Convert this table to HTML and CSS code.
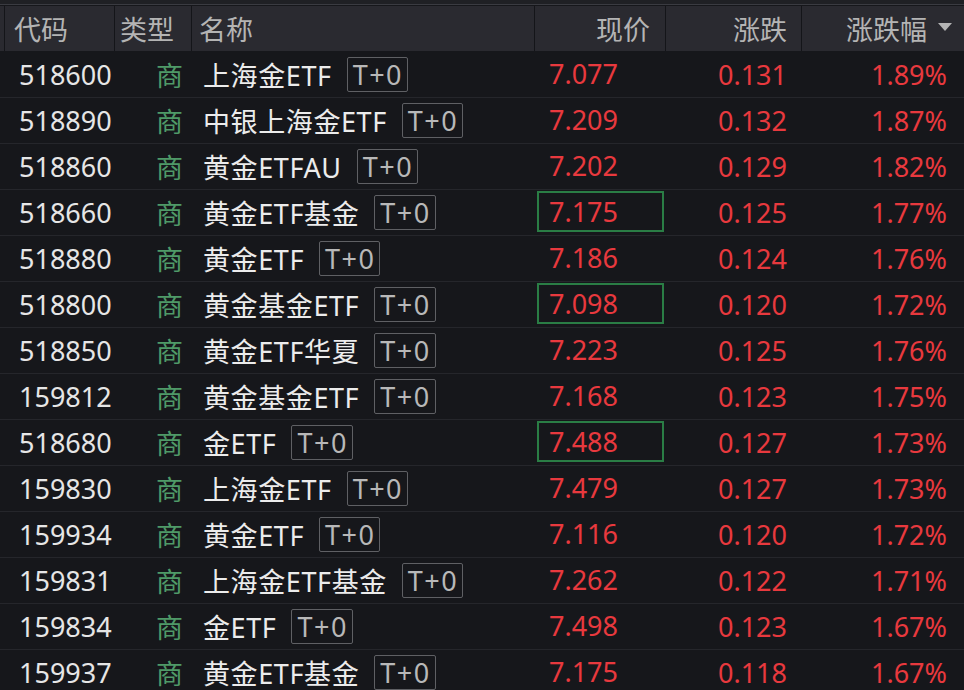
FILE: index.html
```html
<!DOCTYPE html>
<html lang="zh-CN">
<head>
<meta charset="utf-8">
<link rel="stylesheet" href="styles.css">
</head>
<body>
<div class="topbar"></div>
<div class="table">
  <div class="row head">
    <div class="c edge"></div>
    <div class="c code">代码</div>
    <div class="c type">类型</div>
    <div class="c name">名称</div>
    <div class="c price">现价</div>
    <div class="c chg">涨跌</div>
    <div class="c pct">涨跌幅<span class="tri"></span></div>
  </div>
  <div class="row"><div class="c edge"></div><div class="c code">518600</div><div class="c type">商</div><div class="c name"><span class="nm">上海金ETF</span><span class="tag">T+0</span></div><div class="c price"><span class="v">7.077</span></div><div class="c chg">0.131</div><div class="c pct">1.89%</div></div>
  <div class="row"><div class="c edge"></div><div class="c code">518890</div><div class="c type">商</div><div class="c name"><span class="nm">中银上海金ETF</span><span class="tag">T+0</span></div><div class="c price"><span class="v">7.209</span></div><div class="c chg">0.132</div><div class="c pct">1.87%</div></div>
  <div class="row"><div class="c edge"></div><div class="c code">518860</div><div class="c type">商</div><div class="c name"><span class="nm">黄金ETFAU</span><span class="tag">T+0</span></div><div class="c price"><span class="v">7.202</span></div><div class="c chg">0.129</div><div class="c pct">1.82%</div></div>
  <div class="row"><div class="c edge"></div><div class="c code">518660</div><div class="c type">商</div><div class="c name"><span class="nm">黄金ETF基金</span><span class="tag">T+0</span></div><div class="c price"><span class="v hl">7.175</span></div><div class="c chg">0.125</div><div class="c pct">1.77%</div></div>
  <div class="row"><div class="c edge"></div><div class="c code">518880</div><div class="c type">商</div><div class="c name"><span class="nm">黄金ETF</span><span class="tag">T+0</span></div><div class="c price"><span class="v">7.186</span></div><div class="c chg">0.124</div><div class="c pct">1.76%</div></div>
  <div class="row"><div class="c edge"></div><div class="c code">518800</div><div class="c type">商</div><div class="c name"><span class="nm">黄金基金ETF</span><span class="tag">T+0</span></div><div class="c price"><span class="v hl">7.098</span></div><div class="c chg">0.120</div><div class="c pct">1.72%</div></div>
  <div class="row"><div class="c edge"></div><div class="c code">518850</div><div class="c type">商</div><div class="c name"><span class="nm">黄金ETF华夏</span><span class="tag">T+0</span></div><div class="c price"><span class="v">7.223</span></div><div class="c chg">0.125</div><div class="c pct">1.76%</div></div>
  <div class="row"><div class="c edge"></div><div class="c code">159812</div><div class="c type">商</div><div class="c name"><span class="nm">黄金基金ETF</span><span class="tag">T+0</span></div><div class="c price"><span class="v">7.168</span></div><div class="c chg">0.123</div><div class="c pct">1.75%</div></div>
  <div class="row"><div class="c edge"></div><div class="c code">518680</div><div class="c type">商</div><div class="c name"><span class="nm">金ETF</span><span class="tag">T+0</span></div><div class="c price"><span class="v hl">7.488</span></div><div class="c chg">0.127</div><div class="c pct">1.73%</div></div>
  <div class="row"><div class="c edge"></div><div class="c code">159830</div><div class="c type">商</div><div class="c name"><span class="nm">上海金ETF</span><span class="tag">T+0</span></div><div class="c price"><span class="v">7.479</span></div><div class="c chg">0.127</div><div class="c pct">1.73%</div></div>
  <div class="row"><div class="c edge"></div><div class="c code">159934</div><div class="c type">商</div><div class="c name"><span class="nm">黄金ETF</span><span class="tag">T+0</span></div><div class="c price"><span class="v">7.116</span></div><div class="c chg">0.120</div><div class="c pct">1.72%</div></div>
  <div class="row"><div class="c edge"></div><div class="c code">159831</div><div class="c type">商</div><div class="c name"><span class="nm">上海金ETF基金</span><span class="tag">T+0</span></div><div class="c price"><span class="v">7.262</span></div><div class="c chg">0.122</div><div class="c pct">1.71%</div></div>
  <div class="row"><div class="c edge"></div><div class="c code">159834</div><div class="c type">商</div><div class="c name"><span class="nm">金ETF</span><span class="tag">T+0</span></div><div class="c price"><span class="v">7.498</span></div><div class="c chg">0.123</div><div class="c pct">1.67%</div></div>
  <div class="row"><div class="c edge"></div><div class="c code">159937</div><div class="c type">商</div><div class="c name"><span class="nm">黄金ETF基金</span><span class="tag">T+0</span></div><div class="c price"><span class="v">7.175</span></div><div class="c chg">0.118</div><div class="c pct">1.67%</div></div>
</div>
</body>
</html>
```
FILE: styles.css
```css
html, body {
  margin: 0;
  padding: 0;
  background: #16171b;
  overflow: hidden;
}
body {
  width: 964px;
  height: 690px;
  font-family: "Noto Sans", "Noto Sans CJK SC", sans-serif;
  font-size: 27px;
  color: #e8e8e8;
}
.topbar {
  height: 4px;
  background: #1f2024;
  border-bottom: 1px solid #3a3b41;
}
.table {
  display: flex;
  flex-direction: column;
}
.row {
  display: grid;
  grid-template-columns: 5px 110px 77px 343px 131px 136px 162px;
  height: 46px;
  border-bottom: 1px solid #25262b;
  box-sizing: border-box;
  align-items: center;
}
.c {
  white-space: nowrap;
  display: flex;
  align-items: center;
  height: 100%;
  box-sizing: border-box;
}
.code { padding-left: 14px; color: #e6e6e6; }
.type { padding-left: 41px; color: #4f9a68; }
.name { padding-left: 11px; color: #ececec; }
.nm { letter-spacing: 0.6px; }
.tag {
  margin-left: 15px;
  border: 1px solid #5f6064;
  border-radius: 2px;
  color: #b8b8b8;
  height: 35px;
  box-sizing: border-box;
  padding: 0 4px 0 5px;
  letter-spacing: 1.5px;
  display: inline-flex;
  align-items: center;
  line-height: 1;
}
.price { color: #e8393e; align-items: stretch; }
.price .v {
  display: flex;
  align-items: center;
  flex: 1;
  padding-left: 11px;
  margin: 1px 2px 3px 2px;
  border: 1px solid transparent;
}
.price .v.hl { border: 2px solid #2a7d45; padding-left: 10px; }
.chg { color: #e8393e; justify-content: flex-end; padding-right: 15px; }
.pct { color: #e8393e; justify-content: flex-end; padding-right: 17px; }

.head {
  margin-top: 1px;
  background: #2a2a30;
  border-bottom: 1px solid #16171b;
}
.head .c {
  color: #b4b4b4;
  border-right: 1px solid #141519;
}
.head .c.pct { border-right: none; }
.head .code { padding-left: 9px; }
.head .type { padding-left: 5px; }
.head .name { padding-left: 7px; }
.head .price { justify-content: flex-end; align-items: center; padding-right: 15px; }
.head .chg { padding-right: 14px; }
.head .pct { padding-right: 12px; }
.tri {
  width: 0;
  height: 0;
  border-left: 7px solid transparent;
  border-right: 7px solid transparent;
  border-top: 8px solid #b4b4b4;
  margin-left: 11px;
  margin-bottom: 4px;
}
```
